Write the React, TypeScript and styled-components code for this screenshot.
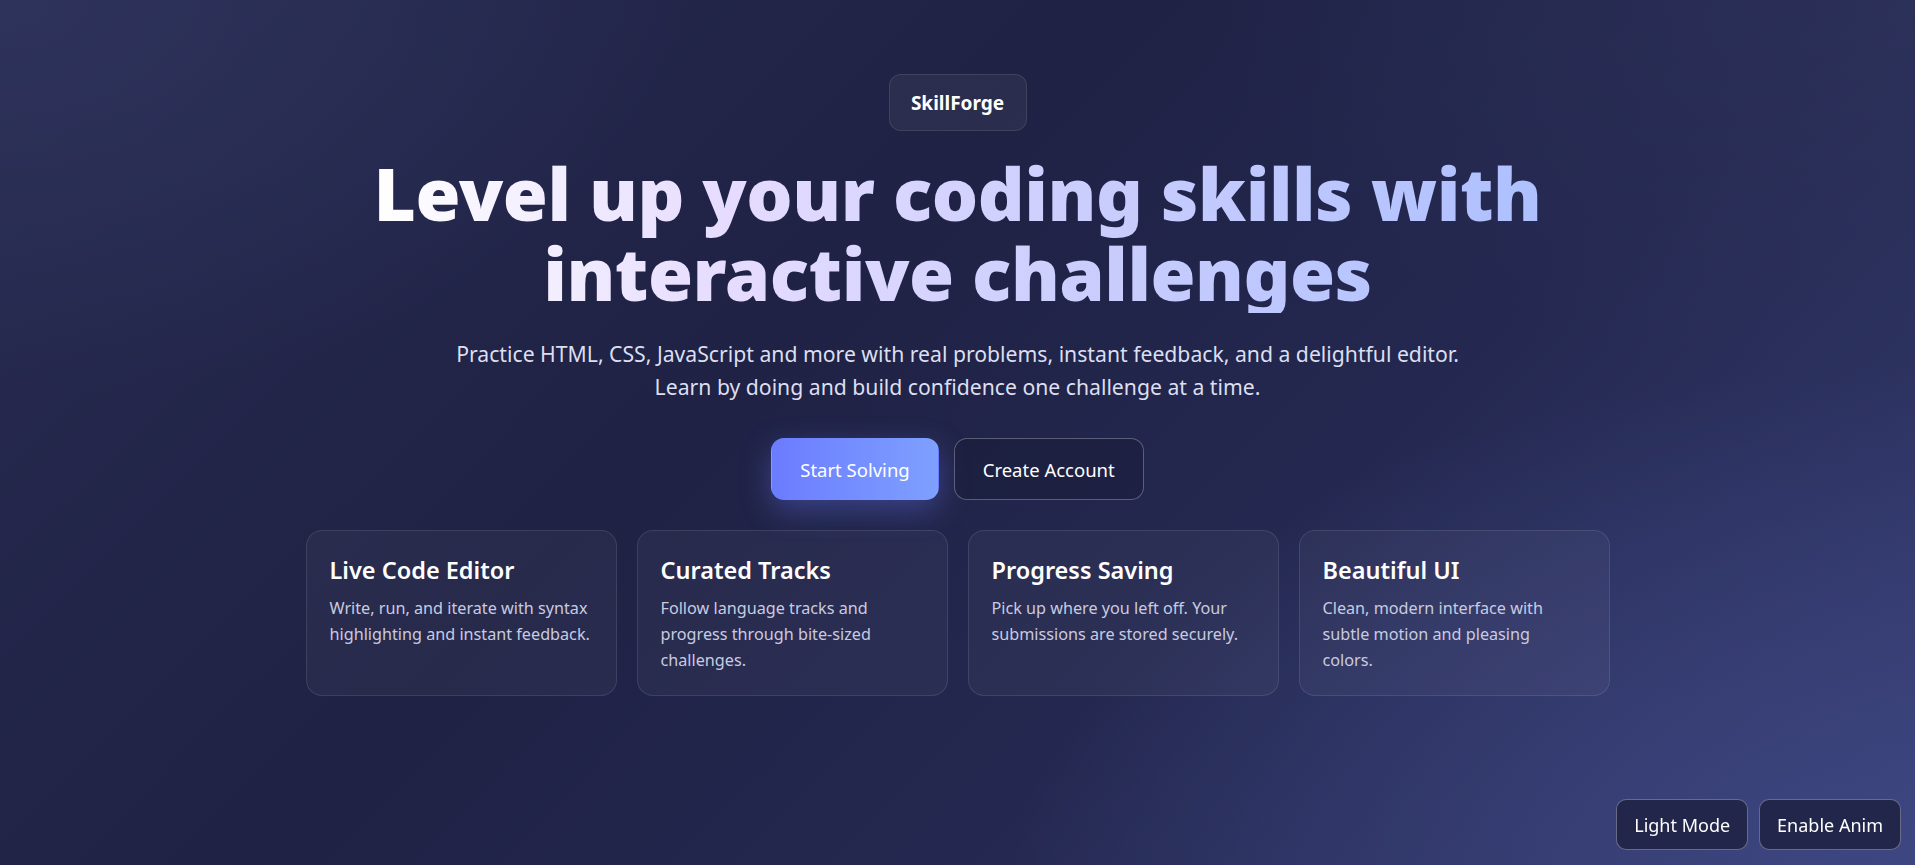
import React from "react";
import styled, { createGlobalStyle } from "styled-components";

const GlobalStyle = createGlobalStyle`
  * { box-sizing: border-box; }
  html, body { margin: 0; padding: 0; }
  body {
    font-family: "Noto Sans", "Open Sans", sans-serif;
    color: #e8eaf6;
    background: #1f2344;
  }
`;

const Page = styled.main`
  min-height: 865px;
  width: 100%;
  background:
    radial-gradient(ellipse 900px 500px at 100% 100%, rgba(64, 74, 135, 0.75), rgba(64, 74, 135, 0) 100%),
    radial-gradient(ellipse 700px 400px at 0% 0%, rgba(48, 53, 95, 0.8), rgba(48, 53, 95, 0) 100%),
    radial-gradient(ellipse 700px 400px at 100% 0%, rgba(46, 51, 92, 0.7), rgba(46, 51, 92, 0) 100%),
    linear-gradient(135deg, #272b50 0%, #1f2244 40%, #242850 65%, #353c70 100%);
  display: flex;
  flex-direction: column;
  align-items: center;
  padding-top: 74px;
`;

const Badge = styled.div`
  width: 138px;
  height: 57px;
  display: flex;
  align-items: center;
  justify-content: center;
  border-radius: 12px;
  background: rgba(255, 255, 255, 0.05);
  border: 1px solid rgba(255, 255, 255, 0.1);
  font-weight: 700;
  font-size: 19px;
  color: #ffffff;
`;

const Title = styled.h1`
  margin: 22px 0 0;
  font-size: 73px;
  line-height: 80px;
  font-weight: 900;
  text-align: center;
  letter-spacing: -0.5px;
  background: linear-gradient(90deg, #ffffff 0%, #e6dcff 30%, #c9cdfd 62%, #aec0ff 100%);
  -webkit-background-clip: text;
  background-clip: text;
  color: transparent;
`;

const Subtitle = styled.p`
  margin: 24px 0 0;
  font-size: 21.2px;
  line-height: 33px;
  text-align: center;
  color: #dcdff0;
`;

const Actions = styled.div`
  display: flex;
  gap: 15px;
  margin-top: 35px;
`;

const Button = styled.button<{ $primary?: boolean }>`
  height: 62px;
  padding: 0 28px;
  border-radius: 13px;
  font-family: inherit;
  font-size: 18.5px;
  color: #ffffff;
  cursor: pointer;
  border: 1px solid ${(p) => (p.$primary ? "transparent" : "rgba(255,255,255,0.28)")};
  background: ${(p) =>
    p.$primary ? "linear-gradient(90deg, #6b7cff 0%, #7ea0ff 100%)" : "rgba(20, 22, 48, 0.35)"};
  box-shadow: ${(p) => (p.$primary ? "0 10px 30px rgba(107, 124, 255, 0.35)" : "none")};
`;

const Features = styled.section`
  display: grid;
  grid-template-columns: repeat(4, 311px);
  gap: 20px;
  margin-top: 30px;
`;

const Card = styled.article`
  height: 166px;
  padding: 22px 20px 22px 23px;
  border-radius: 16px;
  background: rgba(255, 255, 255, 0.04);
  border: 1px solid rgba(255, 255, 255, 0.1);
`;

const CardTitle = styled.h3`
  margin: 0;
  font-size: 23.5px;
  line-height: 34px;
  font-weight: 600;
  color: #ffffff;
`;

const CardText = styled.p<{ $measure?: number }>`
  margin: 8px 0 0;
  max-width: ${(p) => (p.$measure ? `${p.$measure}px` : "none")};
  font-size: 16.2px;
  line-height: 26px;
  color: #c8cbe0;
`;

const Corner = styled.div`
  position: fixed;
  right: 14px;
  bottom: 15px;
  display: flex;
  gap: 11px;
`;

const CornerButton = styled.button`
  height: 51px;
  padding: 0 17px;
  border-radius: 10px;
  font-family: inherit;
  font-size: 18px;
  color: #ffffff;
  background: #22264a;
  border: 1px solid rgba(255, 255, 255, 0.32);
  cursor: pointer;
`;

const features: { title: string; text: string; measure?: number }[] = [
  { title: "Live Code Editor", text: "Write, run, and iterate with syntax highlighting and instant feedback." },
  { title: "Curated Tracks", text: "Follow language tracks and progress through bite-sized challenges." },
  { title: "Progress Saving", text: "Pick up where you left off. Your submissions are stored securely." },
  { title: "Beautiful UI", text: "Clean, modern interface with subtle motion and pleasing colors.", measure: 250 },
];

export default function App() {
  return (
    <>
      <GlobalStyle />
      <Page>
        <Badge>SkillForge</Badge>
        <Title>
          Level up your coding skills with
          <br />
          interactive challenges
        </Title>
        <Subtitle>
          Practice HTML, CSS, JavaScript and more with real problems, instant feedback, and a delightful editor.
          <br />
          Learn by doing and build confidence one challenge at a time.
        </Subtitle>
        <Actions>
          <Button $primary>Start Solving</Button>
          <Button>Create Account</Button>
        </Actions>
        <Features>
          {features.map((f) => (
            <Card key={f.title}>
              <CardTitle>{f.title}</CardTitle>
              <CardText $measure={f.measure}>{f.text}</CardText>
            </Card>
          ))}
        </Features>
        <Corner>
          <CornerButton>Light Mode</CornerButton>
          <CornerButton>Enable Anim</CornerButton>
        </Corner>
      </Page>
    </>
  );
}
